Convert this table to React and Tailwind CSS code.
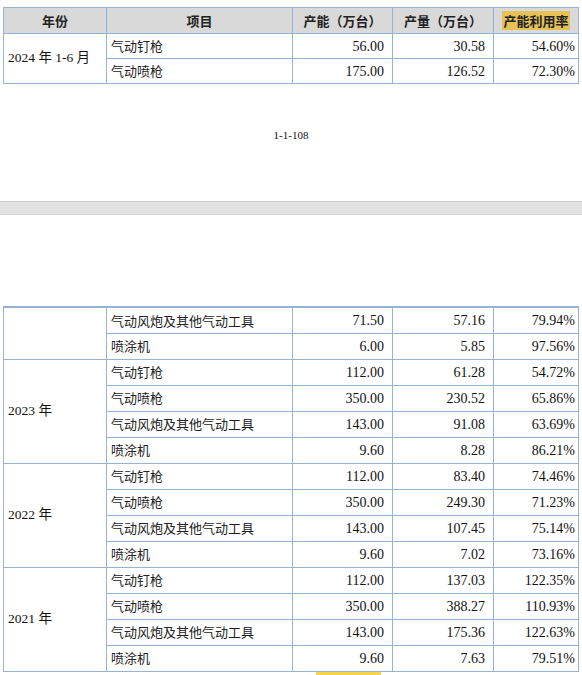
import React from "react";

const B = "border border-[#95b3d7]";
const serif = "font-['Liberation_Serif','Noto_Sans_CJK_SC',serif]";
const cjk = "font-['Noto_Sans_CJK_SC',sans-serif]";

function Cols() {
  return (
    <colgroup>
      <col className="w-[103px]" />
      <col className="w-[186px]" />
      <col className="w-[100px]" />
      <col className="w-[101px]" />
      <col className="w-[85px]" />
    </colgroup>
  );
}

function Row({ item, a, b, c, year, span, h = "h-[26px]" }) {
  return (
    <tr className={h}>
      {year !== undefined && (
        <td rowSpan={span} className={`${B} ${serif} text-[13.5px] text-[#111] pl-[4px] align-middle`}>
          {year}
        </td>
      )}
      <td className={`${B} ${cjk} text-[13px] text-[#222] pl-[4px] align-middle`}>{item}</td>
      <td className={`${B} ${serif} text-[14px] text-[#111] text-right pr-[8px] align-middle`}>{a}</td>
      <td className={`${B} ${serif} text-[14px] text-[#111] text-right pr-[8px] align-middle`}>{b}</td>
      <td className={`${B} ${serif} text-[14px] text-[#111] text-right pr-[3px] align-middle`}>{c}</td>
    </tr>
  );
}

const groups = [
  {
    year: "2023 年",
    rows: [
      ["气动钉枪", "112.00", "61.28", "54.72%"],
      ["气动喷枪", "350.00", "230.52", "65.86%"],
      ["气动风炮及其他气动工具", "143.00", "91.08", "63.69%"],
      ["喷涂机", "9.60", "8.28", "86.21%"],
    ],
  },
  {
    year: "2022 年",
    rows: [
      ["气动钉枪", "112.00", "83.40", "74.46%"],
      ["气动喷枪", "350.00", "249.30", "71.23%"],
      ["气动风炮及其他气动工具", "143.00", "107.45", "75.14%"],
      ["喷涂机", "9.60", "7.02", "73.16%"],
    ],
  },
  {
    year: "2021 年",
    rows: [
      ["气动钉枪", "112.00", "137.03", "122.35%"],
      ["气动喷枪", "350.00", "388.27", "110.93%"],
      ["气动风炮及其他气动工具", "143.00", "175.36", "122.63%"],
      ["喷涂机", "9.60", "7.63", "79.51%"],
    ],
  },
];

export default function App() {
  const th = `${B} ${cjk} bg-[#d9d9d9] text-[13px] font-bold text-[#222] text-center align-middle`;
  return (
    <div className="w-[582px] bg-white">
      <div className="pt-[7px] pl-[3px]">
        <table className="border-collapse table-fixed w-[575px]">
          <Cols />
          <thead>
            <tr className="h-[26px]">
              <th className={th}>年份</th>
              <th className={th}>项目</th>
              <th className={th}>产能（万台）</th>
              <th className={th}>产量（万台）</th>
              <th className={th}>
                <span className="bg-[#e8c255] px-[1px]">产能利用率</span>
              </th>
            </tr>
          </thead>
          <tbody>
            <Row year="2024 年 1-6 月" span={2} item="气动钉枪" a="56.00" b="30.58" c="54.60%" h="h-[25px]" />
            <Row item="气动喷枪" a="175.00" b="126.52" c="72.30%" h="h-[25px]" />
          </tbody>
        </table>
      </div>

      <div className={`pt-[44px] text-center ${serif} text-[11px] leading-[14px] text-[#111]`}>1-1-108</div>

      <div className="mt-[59px] h-[14px] bg-[#e3e3e3] border-t border-b border-t-[#cfcfcf] border-b-[#d6d6d6]" />

      <div className="pt-[91px] pl-[3px]">
        <table className="border-collapse table-fixed w-[575px] border-t-2 border-t-[#95b3d7]">
          <Cols />
          <tbody>
            <Row year="" span={2} item="气动风炮及其他气动工具" a="71.50" b="57.16" c="79.94%" />
            <Row item="喷涂机" a="6.00" b="5.85" c="97.56%" />
            {groups.map((g) =>
              g.rows.map((r, i) => (
                <Row
                  key={g.year + i}
                  year={i === 0 ? g.year : undefined}
                  span={4}
                  item={r[0]}
                  a={r[1]}
                  b={r[2]}
                  c={r[3]}
                />
              ))
            )}
          </tbody>
        </table>
        <div className={`${cjk} text-[13px] leading-[18px] text-[#222] pl-[27px] pt-[1px] whitespace-nowrap`}>
          注：产能、产量数据根据公司实际生产情况统计，
          <span className="bg-[#f7d54a]">产能利用率</span>
          =产量/产能。
        </div>
      </div>
    </div>
  );
}
